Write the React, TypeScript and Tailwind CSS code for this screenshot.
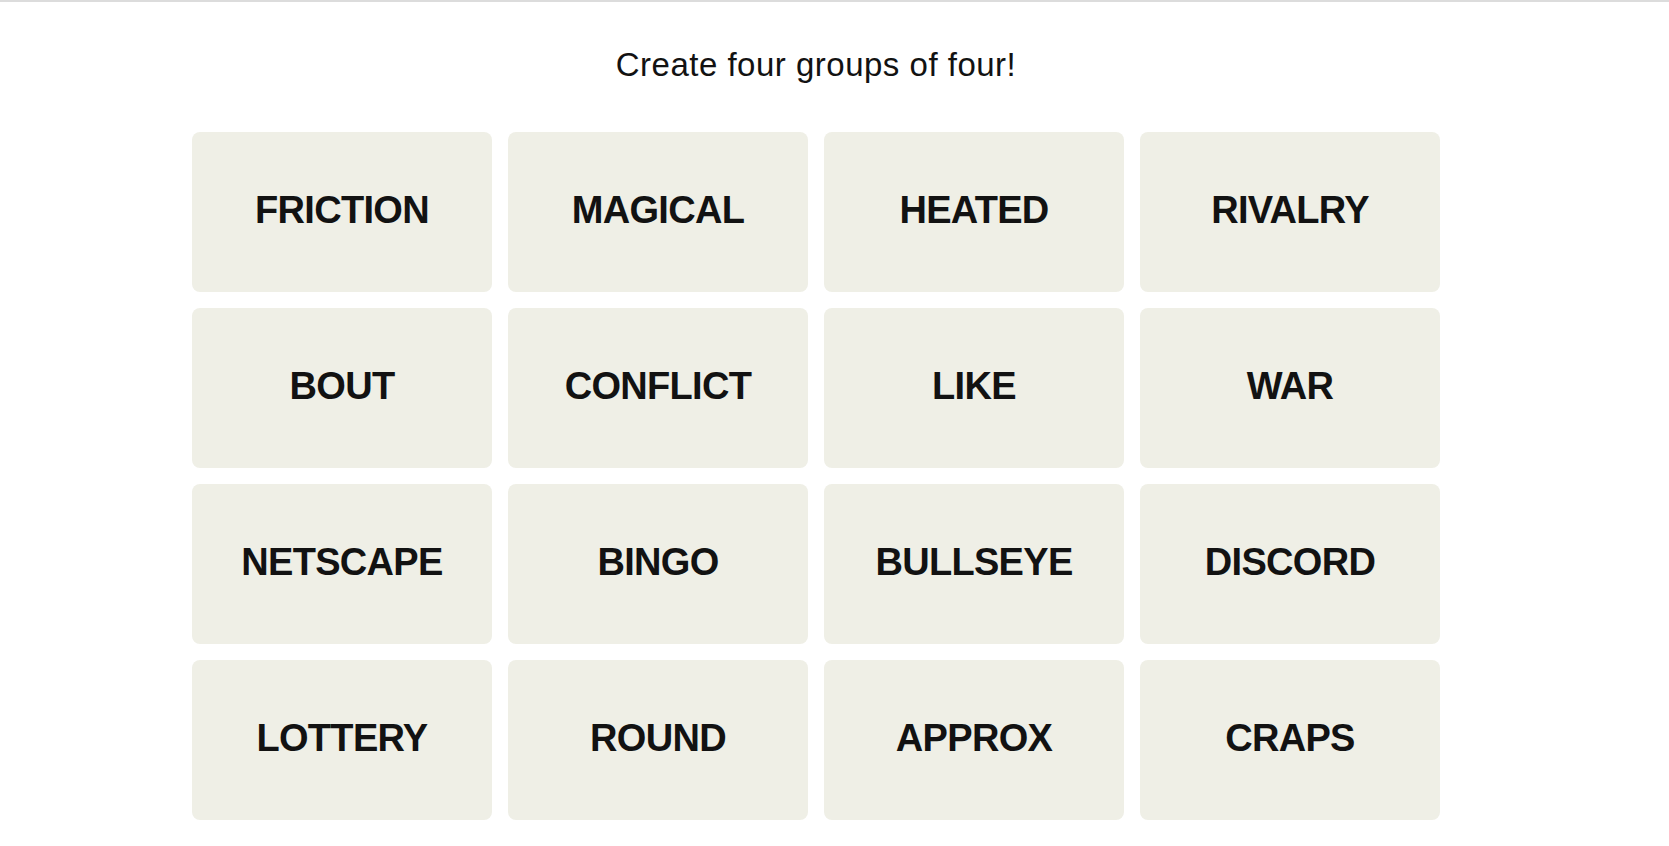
import React from "react";

const words = [
  "FRICTION",
  "MAGICAL",
  "HEATED",
  "RIVALRY",
  "BOUT",
  "CONFLICT",
  "LIKE",
  "WAR",
  "NETSCAPE",
  "BINGO",
  "BULLSEYE",
  "DISCORD",
  "LOTTERY",
  "ROUND",
  "APPROX",
  "CRAPS",
];

const Tile = ({ word }: { word: string }) => {
  return (
    <button className="h-[160px] w-[300px] rounded-[8px] bg-[#efefe6] flex items-center justify-center pb-[4px]">
      <span className="text-[38px] leading-none font-bold tracking-[-0.7px] text-[#121212]">
        {word}
      </span>
    </button>
  );
};

export default function App() {
  return (
    <div
      className="min-h-screen bg-white border-t-2 border-[#dcdcdc]"
      style={{ fontFamily: '"Liberation Sans", Arial, sans-serif' }}
    >
      <div className="w-[1632px] flex flex-col items-center">
        <h2 className="mt-[46px] text-[33px] leading-none font-normal tracking-[0.5px] text-[#121212]">
          Create four groups of four!
        </h2>
        <div className="mt-[51px] grid grid-cols-4 gap-4">
          {words.map((w) => (
            <Tile key={w} word={w} />
          ))}
        </div>
      </div>
    </div>
  );
}
